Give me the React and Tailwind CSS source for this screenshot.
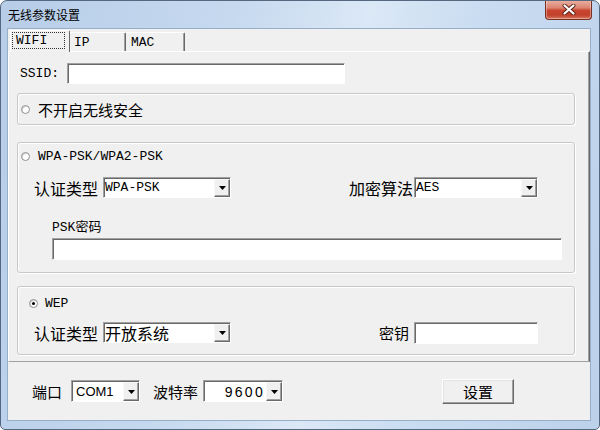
const mono = "font-['Liberation_Mono','Noto_Sans_CJK_SC',monospace] text-[13px]";
const cjk = "font-['Noto_Sans_CJK_SC',sans-serif]";

function Radio({ checked }) {
  return (
    <span className="flex h-[9px] w-[9px] shrink-0 items-center justify-center rounded-full border border-[#8e8f8f] bg-white shadow-[inset_1px_1px_0_#d6d6d6]">
      {checked && <span className="h-[3px] w-[3px] rounded-full bg-black" />}
    </span>
  );
}

function Arrow() {
  return (
    <div className="flex h-full w-[16px] shrink-0 items-center justify-center border-t border-l border-r border-b border-t-[#f8f8f8] border-l-[#f8f8f8] border-r-[#696969] border-b-[#696969] bg-[#f0f0f0] shadow-[inset_-1px_-1px_0_#a0a0a0]">
      <svg width="7" height="4" viewBox="0 0 7 4">
        <path d="M0 0h7L3.5 4z" fill="#000" />
      </svg>
    </div>
  );
}

function Select({ className, children, textClass = "" }) {
  return (
    <div className={`flex shrink-0 border border-t-[#a0a0a0] border-l-[#a0a0a0] border-b-white border-r-white bg-white shadow-[inset_1px_1px_0_#696969] pt-px pl-px ${className}`}>
      <div className={`flex flex-1 items-center whitespace-nowrap leading-[18px] text-black ${textClass}`}>{children}</div>
      <Arrow />
    </div>
  );
}

function Input({ className }) {
  return <div className={`shrink-0 border border-t-[#a0a0a0] border-l-[#a0a0a0] border-b-white border-r-white bg-white shadow-[inset_1px_1px_0_#696969] ${className}`} />;
}

const group = "ml-[8px] w-[558px] shrink-0 rounded-[3px] border border-[#c8c8c8] shadow-[inset_1px_1px_0_#ffffff,1px_1px_0_#ffffff]";

export default function App() {
  return (
    <div className="flex h-[430px] w-[600px] flex-col overflow-hidden rounded-t-[7px] rounded-b-[5px] border border-[#55687f] bg-[linear-gradient(100deg,#b7cde8_0%,#c6d9ef_35%,#dbe8f6_55%,#c9dcf1_72%,#bcd1ea_100%)]">
      <div className="flex h-[28px] shrink-0 items-start justify-between pl-[7px] pr-[7px]">
        <span className={`${cjk} mt-[7px] text-[12px] leading-[14px] text-black`}>无线参数设置</span>
        <div className="-mt-px flex h-[20px] w-[47px] items-center justify-center rounded-b-[4px] border border-t-0 border-[#7b2f22] bg-[linear-gradient(180deg,#eab2a4_0%,#dc8672_40%,#c8462f_55%,#c1412b_80%,#d77a62_100%)] shadow-[inset_0_0_0_1px_rgba(255,255,255,0.35)]">
          <svg width="14" height="11" viewBox="0 0 14 11">
            <path d="M2.5 1.5L11.5 9.5M11.5 1.5L2.5 9.5" stroke="#5a2418" strokeWidth="4" strokeLinecap="round" />
            <path d="M2.5 1.5L11.5 9.5M11.5 1.5L2.5 9.5" stroke="#ffffff" strokeWidth="2.2" strokeLinecap="round" />
          </svg>
        </div>
      </div>

      <div className="ml-[7px] mr-[9px] flex h-[391px] shrink-0 flex-col bg-[#f0f0f0] shadow-[0_0_0_1px_#97aec8]">
        {/* tabs */}
        <div className={`${mono} flex h-[22px] shrink-0 items-end pl-[2px] leading-none text-black`}>
          <div className="relative z-10 flex h-[22px] w-[60px] translate-y-px items-center rounded-tr-[2px] border-t border-l border-r border-t-white border-l-white border-r-[#696969] bg-[#f0f0f0] pl-[1px] pb-[2px]">
            <span className="flex h-[17px] w-[53px] items-center border border-dotted border-[#333] pl-[3px]">WIFI</span>
          </div>
          <div className="flex h-[19px] w-[56px] items-center rounded-tr-[2px] border-t border-r border-t-white border-r-[#696969] pl-[4px] shadow-[inset_-1px_0_0_#a0a0a0]">IP</div>
          <div className="flex h-[19px] w-[59px] items-center rounded-tr-[2px] border-t border-r border-t-white border-r-[#696969] pl-[5px] shadow-[inset_-1px_0_0_#a0a0a0]">MAC</div>
        </div>

        {/* tab page */}
        <div className="flex h-[311px] shrink-0 flex-col border border-t-white border-l-white border-r-[#696969] border-b-[#a0a0a0] shadow-[inset_-1px_0_0_#a0a0a0]">
          <div className="mt-[11px] flex h-[21px] shrink-0 items-center pl-[11px]">
            <span className={`${mono} w-[47px] leading-none text-black`}>SSID:</span>
            <Input className="h-[21px] w-[278px]" />
          </div>

          <div className={`${group} mt-[9px] flex h-[32px] items-center pl-[3px]`}>
            <Radio />
            <span className={`${cjk} ml-[8px] text-[15px] leading-none text-black`}>不开启无线安全</span>
          </div>

          <div className={`${group} mt-[17px] flex h-[131px] flex-col`}>
            <div className="flex h-[27px] items-center pl-[3px]">
              <Radio />
              <span className={`${mono} ml-[8px] leading-none text-black`}>WPA-PSK/WPA2-PSK</span>
            </div>
            <div className="mt-[7px] flex h-[21px] items-center pl-[16px]">
              <span className={`${cjk} w-[69px] text-[16px] leading-none text-black`}>认证类型</span>
              <Select className="h-[21px] w-[128px]" textClass={mono}>WPA-PSK</Select>
              <span className={`${cjk} ml-[118px] w-[65px] text-[16px] leading-none text-black`}>加密算法</span>
              <Select className="h-[21px] w-[124px]" textClass={mono}>AES</Select>
            </div>
            <div className={`${mono} mt-[20px] flex h-[18px] items-center pl-[34px] leading-none text-black`}>PSK密码</div>
            <Input className="ml-[34px] mt-[2px] h-[22px] w-[510px]" />
          </div>

          <div className={`${group} mt-[13px] flex h-[69px] flex-col`}>
            <div className="flex h-[33px] items-center pl-[11px]">
              <Radio checked />
              <span className={`${mono} ml-[7px] leading-none text-black`}>WEP</span>
            </div>
            <div className="mt-[2px] flex h-[21px] items-center pl-[16px]">
              <span className={`${cjk} w-[69px] text-[16px] leading-none text-black`}>认证类型</span>
              <Select className="h-[21px] w-[128px]" textClass={`${cjk} text-[16px]`}>开放系统</Select>
              <span className={`${cjk} ml-[148px] w-[35px] text-[15px] leading-none text-black`}>密钥</span>
              <Input className="h-[22px] w-[124px]" />
            </div>
          </div>
        </div>

        {/* bottom bar */}
        <div className="flex flex-1 items-center pl-[24px]">
          <span className={`${cjk} w-[39px] text-[15px] leading-none text-black`}>端口</span>
          <Select className="h-[22px] w-[69px]" textClass="font-['Liberation_Sans',sans-serif] text-[13px] pl-[3px]">COM1</Select>
          <span className={`${cjk} ml-[13px] w-[50px] text-[15px] leading-none text-black`}>波特率</span>
          <Select className="h-[22px] w-[80px]" textClass="font-['Liberation_Sans',sans-serif] text-[14px] tracking-[2.3px] justify-end pr-[1px]">9600</Select>
          <button className={`${cjk} ml-[159px] flex h-[25px] w-[72px] items-center justify-center border border-t-white border-l-white border-r-[#696969] border-b-[#696969] bg-[#f0f0f0] text-[15px] leading-none text-black shadow-[inset_-1px_-1px_0_#a0a0a0,inset_1px_1px_0_#e3e3e3]`}>
            设置
          </button>
        </div>
      </div>
    </div>
  );
}
